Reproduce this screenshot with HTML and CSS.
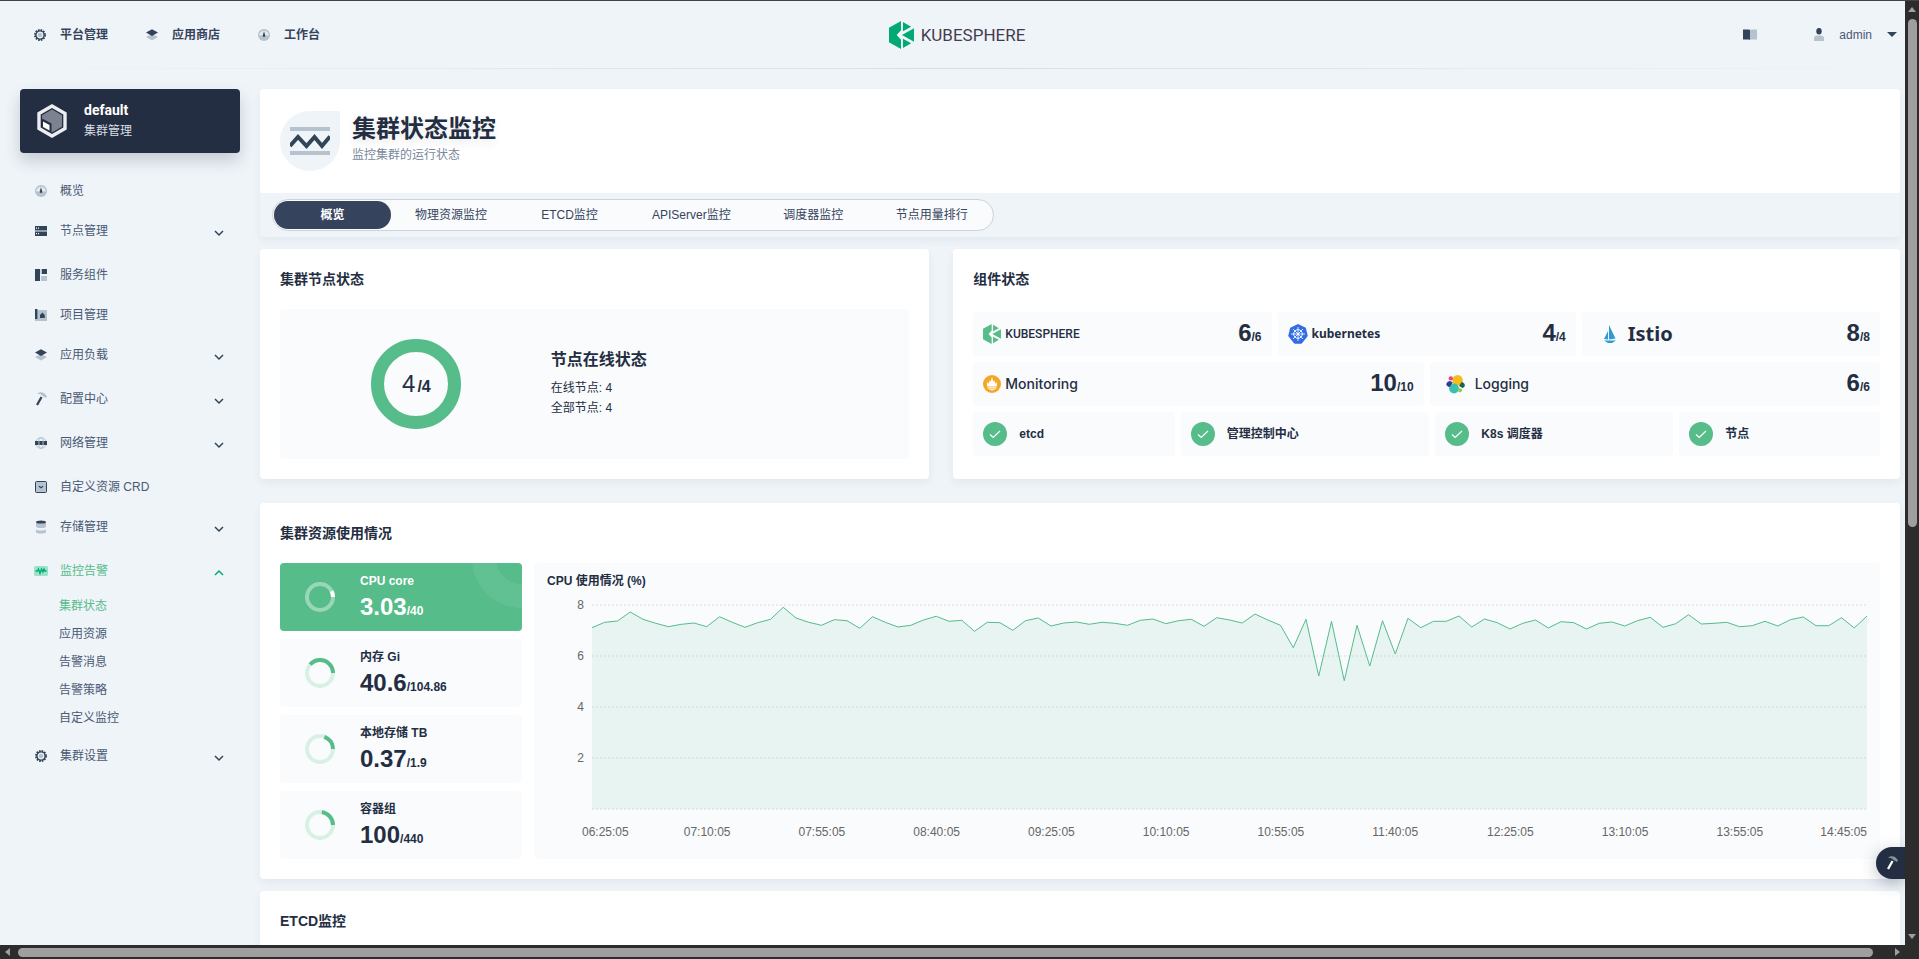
FILE: index.html
```html
<!DOCTYPE html>
<html lang="zh-CN">
<head>
  <meta charset="UTF-8">
  <meta name="viewport" content="width=device-width, initial-scale=1.0">
  <title>KubeSphere</title>
  <link rel="stylesheet" href="styles.css">
</head>
<body>
  <svg class="sprite" aria-hidden="true">
    <symbol id="i-gear" viewBox="0 0 12 12">
      <circle cx="6" cy="6" r="5" fill="none" stroke="#324558" stroke-width="2" stroke-dasharray="1.57 1.05"/>
      <circle cx="6" cy="6" r="4.1" fill="none" stroke="#324558" stroke-width="1.4"/>
      <circle cx="6" cy="6" r="2.3" fill="#b6c2cd"/>
    </symbol>
    <symbol id="i-layers" viewBox="0 0 12 12">
      <path d="M0 8l6-3 6 3-6 3.600z" fill="#b6c2cd"/>
      <path d="M0 3.600L6 .200l6 3.400L6 7z" fill="#324558"/>
    </symbol>
    <symbol id="i-dash" viewBox="0 0 12 12">
      <circle cx="6" cy="6" r="6" fill="#b6c2cd"/>
      <path d="M1.200 6.500a4.800 4.800 0 0 1 9.600 0z" fill="#e3e9ef"/>
      <path d="M6 2.200l1.200 4a1.300 1.300 0 1 1-2.400 0z" fill="#324558"/>
    </symbol>
    <symbol id="i-nodes" viewBox="0 0 12 12">
      <path d="M0 1h12v4.500H0zM0 6.500h12V11H0z" fill="#324558"/>
      <path d="M1 2.600h1v1.200H1zM3 2.600h1v1.200H3zM1 8.100h1v1.200H1zM3 8.100h1v1.200H3z" fill="#fff"/>
    </symbol>
    <symbol id="i-blocks" viewBox="0 0 12 12">
      <path d="M0 0h5v12H0zM7 0h5v5H7z" fill="#324558"/>
      <path d="M6 7h6v5H6zM5.500 0H7v5H5.500z" fill="#b6c2cd"/>
    </symbol>
    <symbol id="i-project" viewBox="0 0 12 12">
      <path d="M2 1h10v11H0v-2h2z" fill="#b6c2cd"/>
      <path d="M0 0h2.400v10H0zM5 9V6l2.400-2.400L9.800 6v3z" fill="#324558"/>
    </symbol>
    <symbol id="i-hammer" viewBox="0 0 12 14">
      <path d="M2 1.500C4.500 0 7 0 9 1l3 3-1 2-2-1.200L7.500 4 6 2.600z" fill="#b6c2cd"/>
      <path d="M5.500 4.500l2 1L3 13.500l-2-1z" fill="#324558"/>
    </symbol>
    <symbol id="i-net" viewBox="0 0 12 12">
      <circle cx="6" cy="6" r="5.400" fill="none" stroke="#b6c2cd"/>
      <ellipse cx="6" cy="6" rx="2.400" ry="5.400" fill="none" stroke="#b6c2cd"/>
      <path d="M0 4h3.500v4H0zM4.300 4h3.400v4H4.300zM8.500 4H12v4H8.500z" fill="#324558"/>
    </symbol>
    <symbol id="i-crd" viewBox="0 0 12 12">
      <rect x=".5" y=".5" width="11" height="11" rx="1" fill="#b6c2cd" stroke="#324558"/>
      <path d="M4 5.300l2 1.500 2-1.500" fill="none" stroke="#324558" stroke-width="1.200"/>
    </symbol>
    <symbol id="i-db" viewBox="0 0 12 14">
      <path d="M1 2v4.500c0 2 10 2 10 0V2zM1 9v3c0 2 10 2 10 0V9c0 2-10 2-10 0z" fill="#b6c2cd"/>
      <ellipse cx="6" cy="2" rx="5" ry="1.600" fill="#324558"/>
    </symbol>
    <symbol id="i-monitor" viewBox="0 0 14 10">
      <rect width="14" height="10" rx="1.500" fill="#9be3c8"/>
      <path d="M1.500 5h2l1-2 1.500 4.500L7.500 3 9 6l1-3 1 2h1.500" fill="none" stroke="#00aa72" stroke-width="1.300"/>
    </symbol>
    <symbol id="i-down" viewBox="0 0 10 12">
      <path d="M1 6l4 4 4-4" fill="none" stroke="#324558" stroke-width="1.500"/>
    </symbol>
    <symbol id="i-up" viewBox="0 0 10 12">
      <path d="M1 10l4-4 4 4" fill="none" stroke="#00aa72" stroke-width="1.500"/>
    </symbol>
    <symbol id="i-ks" viewBox="0 0 52 58">
      <path d="M0 14L25 0v19l-9 10 9 10v19L0 44zM29 2l17 10-17 9zM29 56l17-10-17-9zM27 29l25-14v28z"/>
    </symbol>
    <symbol id="i-check" viewBox="0 0 24 24">
      <circle cx="12" cy="12" r="12" fill="#55bc8a"/>
      <path d="M7 12.500l3.200 3L17 9" fill="none" stroke="#fff" stroke-width="1.200"/>
    </symbol>
  </svg>

  <div class="window">
    <div class="viewport">
      <div class="page">
        <header class="header">
          <nav class="top-nav">
            <a href="#"><svg class="icon"><use href="#i-gear"/></svg>平台管理</a>
            <a href="#"><svg class="icon"><use href="#i-layers"/></svg>应用商店</a>
            <a href="#"><svg class="icon"><use href="#i-dash"/></svg>工作台</a>
          </nav>
          <a class="logo" href="#"><svg class="logo-mark"><use href="#i-ks"/></svg>KUBESPHERE</a>
          <div class="user-nav">
            <a href="#" aria-label="文档">
              <svg class="icon-book" viewBox="0 0 14 11">
                <path d="M0 .500h6l1 .500v10l-1-.500H0z" fill="#324558"/>
                <path d="M14 .500H8L7 1v10l1-.500h6z" fill="#b6c2cd"/>
              </svg>
            </a>
            <button class="user">
              <svg class="icon-user" viewBox="0 0 10 13">
                <path d="M0 13v-3c0-2 2-2.500 5-2.500s5 .500 5 2.500v3z" fill="#b6c2cd"/>
                <ellipse cx="5" cy="3.300" rx="2.700" ry="3.300" fill="#324558"/>
              </svg>
              admin
              <svg class="icon-caret" viewBox="0 0 10 5"><path d="M0 0h10L5 5z" fill="#324558"/></svg>
            </button>
          </div>
        </header>
        <div class="header-line"></div>

        <div class="layout">
          <aside class="sidebar">
            <div class="cluster">
              <svg class="cluster-icon" viewBox="0 0 30 34">
                <path d="M15 2l13 7.500v15L15 32 2 24.500v-15z" fill="none" stroke="#eceef0" stroke-width="3.400"/>
                <path d="M15 5.500l10 5.700v11.600L15 28.500 5 22.800V11.200z" fill="#7c8290"/>
                <path d="M5 14.500l9.500 5v9L5 23.500z" fill="#242e42"/>
                <path d="M6 17.500l6.500 3.500v5.500L6 23z" fill="#fff"/>
              </svg>
              <div class="cluster-text">
                <strong>default</strong>
                <p>集群管理</p>
              </div>
            </div>

            <ul class="menu">
              <li><a href="#"><svg class="icon"><use href="#i-dash"/></svg>概览</a></li>
              <li class="parent"><button><svg class="icon"><use href="#i-nodes"/></svg>节点管理<svg class="arrow"><use href="#i-down"/></svg></button></li>
              <li><a href="#"><svg class="icon"><use href="#i-blocks"/></svg>服务组件</a></li>
              <li><a href="#"><svg class="icon"><use href="#i-project"/></svg>项目管理</a></li>
              <li class="parent"><button><svg class="icon"><use href="#i-layers"/></svg>应用负载<svg class="arrow"><use href="#i-down"/></svg></button></li>
              <li class="parent"><button><svg class="icon tall"><use href="#i-hammer"/></svg>配置中心<svg class="arrow"><use href="#i-down"/></svg></button></li>
              <li class="parent"><button><svg class="icon"><use href="#i-net"/></svg>网络管理<svg class="arrow"><use href="#i-down"/></svg></button></li>
              <li><a href="#"><svg class="icon"><use href="#i-crd"/></svg>自定义资源 CRD</a></li>
              <li class="parent"><button><svg class="icon tall"><use href="#i-db"/></svg>存储管理<svg class="arrow"><use href="#i-down"/></svg></button></li>
              <li class="parent">
                <button class="active"><svg class="icon wide"><use href="#i-monitor"/></svg>监控告警<svg class="arrow"><use href="#i-up"/></svg></button>
                <ul class="submenu">
                  <li><a class="active" href="#">集群状态</a></li>
                  <li><a href="#">应用资源</a></li>
                  <li><a href="#">告警消息</a></li>
                  <li><a href="#">告警策略</a></li>
                  <li><a href="#">自定义监控</a></li>
                </ul>
              </li>
              <li class="parent"><button><svg class="icon"><use href="#i-gear"/></svg>集群设置<svg class="arrow"><use href="#i-down"/></svg></button></li>
            </ul>
          </aside>

          <main class="main">
            <section class="banner">
              <div class="banner-top">
                <div class="banner-icon">
                  <svg viewBox="0 0 40 28">
                    <path d="M0 0h40v4H0zM0 24h40v4H0z" fill="#b6c2cd"/>
                    <path d="M0 19l8-9 8.500 9 8-9 7.500 9 8-9.500" fill="none" stroke="#324558" stroke-width="4"/>
                  </svg>
                </div>
                <div class="banner-text">
                  <h1>集群状态监控</h1>
                  <p>监控集群的运行状态</p>
                </div>
              </div>
              <div class="banner-tabs">
                <div class="tabs">
                  <button class="active">概览</button>
                  <button>物理资源监控</button>
                  <button>ETCD监控</button>
                  <button>APIServer监控</button>
                  <button>调度器监控</button>
                  <button>节点用量排行</button>
                </div>
              </div>
            </section>

            <div class="columns">
              <section class="card nodes">
                <h2>集群节点状态</h2>
                <div class="node-box">
                  <div class="donut"><span>4</span><b>/4</b></div>
                  <div class="node-info">
                    <h3>节点在线状态</h3>
                    <p>在线节点: 4</p>
                    <p>全部节点: 4</p>
                  </div>
                </div>
              </section>

              <section class="card components">
                <h2>组件状态</h2>
                <div class="tiles">
                  <div class="tile-row even">
                    <div class="tile">
                      <svg class="tile-ks"><use href="#i-ks"/></svg>
                      <span class="name-ks">KUBESPHERE</span>
                      <span class="count"><b>6</b>/6</span>
                    </div>
                    <div class="tile">
                      <svg class="tile-k8s" viewBox="0 0 20 20">
                        <path d="M10 0l7.800 3.800L19.800 12l-5.400 6.800q-.5 1-1.500 1H7.100q-1 0-1.500-1L.2 12l2-8.200z" fill="#326de6"/>
                        <g fill="none" stroke="#fff">
                          <circle cx="10" cy="10" r="4.300"/>
                          <path d="M10 3v14M3 10h14M5 5l10 10M15 5L5 15" stroke-width=".8"/>
                        </g>
                        <circle cx="10" cy="10" r="1.200" fill="#fff"/>
                      </svg>
                      <span class="name-k8s">kubernetes</span>
                      <span class="count"><b>4</b>/4</span>
                    </div>
                    <div class="tile">
                      <svg class="tile-istio" viewBox="0 0 12 18">
                        <path d="M5 0l6.500 13.500L5 14.500zM4 6v8.500L0 14zM0 15.500h12L8 18H4z" fill="#2f9bd1"/>
                      </svg>
                      <span class="name-istio">Istio</span>
                      <span class="count"><b>8</b>/8</span>
                    </div>
                  </div>
                  <div class="tile-row even">
                    <div class="tile">
                      <svg class="tile-prom" viewBox="0 0 18 18">
                        <circle cx="9" cy="9" r="9" fill="#f5a623"/>
                        <path d="M4.500 11.500C3.500 9.500 4 8.500 4.500 7l1.200 2L6.500 5l1 2L9 2l1.500 5 1-2 .8 4 1.200-2c.5 1.500 1 2.500 0 4.500zM4.500 12.300h9v1.200h-9zM6 14.300h6c-.5 1.500-5.500 1.500-6 0z" fill="#fff"/>
                      </svg>
                      <span class="name-text">Monitoring</span>
                      <span class="count"><b>10</b>/10</span>
                    </div>
                    <div class="tile">
                      <svg class="tile-log" viewBox="0 0 19 19">
                        <circle cx="11.600" cy="5.200" r="5.200" fill="#f4bd19"/>
                        <circle cx="8" cy="13.500" r="4.900" fill="#3cbeb1"/>
                        <circle cx="4.800" cy="3.400" r="2.200" fill="#ea458b"/>
                        <path d="M4 6l2.800 1.600-3 4.400C-.5 12-1 7 4 6z" fill="#2d3f8c"/>
                        <path d="M15.500 7c4 .500 4.500 5 1 6l-3.500-2z" fill="#14694f"/>
                        <path d="M13 13l3 1.200c.5 3-2.500 4-3.700 2.300z" fill="#93c83e"/>
                      </svg>
                      <span class="name-text">Logging</span>
                      <span class="count"><b>6</b>/6</span>
                    </div>
                  </div>
                  <div class="tile-row">
                    <div class="tile"><svg class="check"><use href="#i-check"/></svg>etcd</div>
                    <div class="tile"><svg class="check"><use href="#i-check"/></svg>管理控制中心</div>
                    <div class="tile"><svg class="check"><use href="#i-check"/></svg>K8s 调度器</div>
                    <div class="tile"><svg class="check"><use href="#i-check"/></svg>节点</div>
                  </div>
                </div>
              </section>
            </div>

            <section class="card usage">
              <h2>集群资源使用情况</h2>
              <div class="usage-body">
                <div class="stats">
                  <div class="stat active">
                    <svg class="ring" viewBox="0 0 30 30">
                      <circle cx="15" cy="15" r="13"/>
                      <circle class="value" cx="15" cy="15" r="13" pathLength="100" stroke-dasharray="7.6 100"/>
                    </svg>
                    <div class="stat-text"><h3>CPU core</h3><p><b>3.03</b>/40</p></div>
                  </div>
                  <div class="stat">
                    <svg class="ring" viewBox="0 0 30 30">
                      <circle cx="15" cy="15" r="13"/>
                      <circle class="value" cx="15" cy="15" r="13" pathLength="100" stroke-dasharray="38.7 100"/>
                    </svg>
                    <div class="stat-text"><h3>内存 Gi</h3><p><b>40.6</b>/104.86</p></div>
                  </div>
                  <div class="stat">
                    <svg class="ring" viewBox="0 0 30 30">
                      <circle cx="15" cy="15" r="13"/>
                      <circle class="value" cx="15" cy="15" r="13" pathLength="100" stroke-dasharray="19.5 100"/>
                    </svg>
                    <div class="stat-text"><h3>本地存储 TB</h3><p><b>0.37</b>/1.9</p></div>
                  </div>
                  <div class="stat">
                    <svg class="ring" viewBox="0 0 30 30">
                      <circle cx="15" cy="15" r="13"/>
                      <circle class="value" cx="15" cy="15" r="13" pathLength="100" stroke-dasharray="22.7 100"/>
                    </svg>
                    <div class="stat-text"><h3>容器组</h3><p><b>100</b>/440</p></div>
                  </div>
                </div>

                <div class="chart">
                  <h3>CPU 使用情况 (%)</h3>
                  <div class="chart-area">
                    <div class="y-axis"><span>8</span><span>6</span><span>4</span><span>2</span></div>
                    <svg class="plot" viewBox="0 0 100 204" preserveAspectRatio="none">
                      <path class="grid" d="M0 0H100M0 51H100M0 102H100M0 153H100M0 204H100"/>
                      <polygon class="area" points="0,204 0,22.7 1,17.3 2,16 3,7 4,14.3 5,18.3 6,21.7 7,19.3 8,18 9,21.7 10,11.7 11,17.3 12,22.3 13,17.7 14,14.3 15,2.3 16,13 17,17.3 18,20.3 19,14.7 20,15.7 21,23.3 22,11.7 23,17.3 24,22 25,20.3 26,15 27,11.3 28,16.3 29,15.3 30,26.3 31,17.3 32,17.7 33,25.3 34,15.7 35,13 36,21 37,18 38,17 39,19.3 40,17.3 41,18.3 42,20.3 43,15.3 44,14 45,18.7 46,15.7 47,14.3 48,21.3 49,12.7 50,15 51,18 52,9 53,15 54,20.3 55,42.7 56,14.3 57,71 58,16.3 59,75.7 60,20.3 61,61 62,15.7 63,49 64,13.3 65,22.7 66,16.3 67,16.3 68,11 69,22 70,14 71,17.7 72,24 73,18.3 74,15 75,23 76,16.7 77,17.7 78,24 79,18.3 80,17 81,21 82,15.7 83,12.3 84,22.3 85,18.7 86,9.7 87,19 88,18.3 89,17.3 90,21.7 91,20.7 92,16.3 93,21 94,14.7 95,12 96,20.7 97,20.7 98,12.7 99,23 100,11 100,204"/>
                      <polyline class="line" points="0,22.7 1,17.3 2,16 3,7 4,14.3 5,18.3 6,21.7 7,19.3 8,18 9,21.7 10,11.7 11,17.3 12,22.3 13,17.7 14,14.3 15,2.3 16,13 17,17.3 18,20.3 19,14.7 20,15.7 21,23.3 22,11.7 23,17.3 24,22 25,20.3 26,15 27,11.3 28,16.3 29,15.3 30,26.3 31,17.3 32,17.7 33,25.3 34,15.7 35,13 36,21 37,18 38,17 39,19.3 40,17.3 41,18.3 42,20.3 43,15.3 44,14 45,18.7 46,15.7 47,14.3 48,21.3 49,12.7 50,15 51,18 52,9 53,15 54,20.3 55,42.7 56,14.3 57,71 58,16.3 59,75.7 60,20.3 61,61 62,15.7 63,49 64,13.3 65,22.7 66,16.3 67,16.3 68,11 69,22 70,14 71,17.7 72,24 73,18.3 74,15 75,23 76,16.7 77,17.7 78,24 79,18.3 80,17 81,21 82,15.7 83,12.3 84,22.3 85,18.7 86,9.7 87,19 88,18.3 89,17.3 90,21.7 91,20.7 92,16.3 93,21 94,14.7 95,12 96,20.7 97,20.7 98,12.7 99,23 100,11"/>
                    </svg>
                  </div>
                  <div class="x-axis">
                    <span>06:25:05</span><span>07:10:05</span><span>07:55:05</span><span>08:40:05</span>
                    <span>09:25:05</span><span>10:10:05</span><span>10:55:05</span><span>11:40:05</span>
                    <span>12:25:05</span><span>13:10:05</span><span>13:55:05</span><span>14:45:05</span>
                  </div>
                </div>
              </div>
            </section>

            <section class="card etcd">
              <h2>ETCD监控</h2>
            </section>
          </main>
        </div>
      </div>

      <button class="toolbox" aria-label="工具箱">
        <svg viewBox="0 0 12 14">
          <path d="M2 1.500C4.500 0 7 0 9 1l3 3-1 2-2-1.200L7.500 4 6 2.600z" fill="#8a909d"/>
          <path d="M5.500 4.500l2 1L3 13.500l-2-1z" fill="#fff"/>
        </svg>
      </button>
    </div>

    <div class="scroll-y">
      <svg viewBox="0 0 8 5"><path d="M0 5h8L4 0z"/></svg>
      <div class="track"><div class="thumb"></div></div>
      <svg viewBox="0 0 8 5"><path d="M0 0h8L4 5z"/></svg>
    </div>
    <div class="scroll-x">
      <svg viewBox="0 0 5 8"><path d="M5 0v8L0 4z"/></svg>
      <div class="track"><div class="thumb"></div></div>
      <svg viewBox="0 0 5 8"><path d="M0 0v8l5-4z"/></svg>
    </div>
    <div class="corner"></div>
  </div>
</body>
</html>
```
FILE: styles.css
```css
* {
  margin: 0;
  padding: 0;
  box-sizing: border-box;
}

body {
  font-family: "Liberation Sans", "Noto Sans CJK SC", sans-serif;
  font-size: 12px;
  line-height: 20px;
  color: #242e42;
  background: #eff4f9;
}

a {
  color: inherit;
  text-decoration: none;
}

button {
  font: inherit;
  color: inherit;
  background: none;
  border: none;
  cursor: pointer;
}

ul {
  list-style: none;
}

svg {
  display: block;
  flex-shrink: 0;
}

.sprite {
  display: none;
}

/* window frame */
.window {
  display: grid;
  grid-template: minmax(0, 1fr) 14px / minmax(0, 1fr) 14px;
  height: 100vh;
  border-top: 1px solid #434347;
  overflow: hidden;
}

.viewport {
  position: relative;
  overflow: hidden;
}

.page {
  width: calc(100% + 15px);
}

.scroll-y,
.scroll-x {
  display: flex;
  align-items: center;
  background: #2c2c2c;
  fill: #9f9f9f;
}

.scroll-y {
  flex-direction: column;
  padding: 6px 0;
}

.scroll-x {
  padding: 0 5px;
}

.scroll-y svg {
  width: 8px;
  height: 5px;
}

.scroll-x svg {
  width: 5px;
  height: 8px;
}

.track {
  flex: 1;
}

.scroll-y .track {
  padding: 7px 0;
}

.scroll-x .track {
  padding: 0 22px 0 8px;
}

.thumb {
  border-radius: 5px;
  background: #9f9f9f;
}

.scroll-y .thumb {
  width: 9px;
  height: 56%;
}

.scroll-x .thumb {
  height: 9px;
}

.corner {
  background: #2c2c2c;
}

/* header */
.header {
  display: grid;
  grid-template-columns: 1fr auto 1fr;
  align-items: center;
  height: 67px;
  padding: 0 23px;
}

.header-line {
  height: 1px;
  background: linear-gradient(to right, rgba(216, 221, 230, 0), #d8dde6 50%, rgba(216, 221, 230, 0));
}

.icon {
  width: 12px;
  height: 12px;
}

.icon.tall {
  height: 14px;
}

.icon.wide {
  width: 14px;
  height: 10px;
  margin: 0 -1px;
}

.top-nav {
  display: flex;
  gap: 38px;
  padding-left: 11px;
  font-weight: bold;
  color: #36435c;
}

.top-nav a {
  display: flex;
  align-items: center;
  gap: 14px;
}

.logo {
  display: flex;
  align-items: center;
  gap: 7px;
  padding-right: 6px;
  font-family: Roboto, sans-serif;
  font-size: 17px;
  color: #443d4e;
}

.logo-mark {
  width: 25px;
  height: 28px;
  fill: #00aa72;
}

.user-nav {
  display: flex;
  justify-content: flex-end;
  align-items: center;
  gap: 57px;
  color: #4a5974;
}

.user {
  display: flex;
  align-items: center;
  gap: 15px;
}

.icon-book {
  width: 14px;
  height: 11px;
}

.icon-user {
  width: 10px;
  height: 13px;
}

.icon-caret {
  width: 10px;
  height: 5px;
}

.layout {
  display: flex;
  gap: 20px;
  padding: 20px;
}

/* sidebar */
.sidebar {
  flex: 0 0 220px;
}

.cluster {
  display: flex;
  align-items: center;
  gap: 17px;
  height: 64px;
  padding: 0 17px;
  border-radius: 4px;
  background: #242e42;
  box-shadow: 0 8px 16px rgba(36, 46, 66, 0.2);
  color: #d8dee5;
}

.cluster-icon {
  width: 30px;
  height: 34px;
}

.cluster-text {
  padding-bottom: 2px;
}

.cluster strong {
  font-family: Roboto, sans-serif;
  font-size: 14px;
  color: #fff;
}

.menu {
  padding: 18px 16px 18px 15px;
  color: #4a5974;
}

.menu > li > a,
.menu > li > button {
  display: flex;
  align-items: center;
  gap: 13px;
  width: 100%;
  height: 40px;
}

.menu .parent {
  padding-bottom: 4px;
}

.menu .active {
  color: #55bc8a;
}

.arrow {
  width: 10px;
  height: 12px;
  margin-left: auto;
}

.submenu {
  padding: 1px 0 0 24px;
}

.submenu a {
  display: block;
  line-height: 28px;
}

/* main */
.main {
  flex: 1;
  min-width: 0;
}

.banner,
.card {
  border-radius: 4px;
  box-shadow: 0 4px 8px rgba(36, 46, 66, 0.06);
}

.banner {
  margin-bottom: 12px;
}

.banner-top {
  display: flex;
  gap: 12px;
  height: 104px;
  padding: 22px 20px;
  border-radius: 4px 4px 0 0;
  background: #fff;
}

.banner-icon {
  display: flex;
  align-items: center;
  justify-content: center;
  width: 60px;
  height: 60px;
  border-radius: 50% 0 50% 50%;
  background: #eff4f9;
}

.banner-icon svg {
  width: 40px;
  height: 28px;
}

.banner-text {
  padding-top: 2px;
}

.banner-text h1 {
  font-size: 24px;
  line-height: 32px;
  text-shadow: 0 4px 8px rgba(36, 46, 66, 0.1);
}

.banner-text p {
  color: #79879c;
}

.banner-tabs {
  display: flex;
  padding: 6px 12px;
}

.tabs {
  display: flex;
  padding: 1px;
  border: 1px solid #ccd3db;
  border-radius: 16px;
  background: #f9fbfd;
}

.tabs button {
  min-width: 117px;
  height: 28px;
  padding: 0 24px;
  border-radius: 14px;
  color: #36435c;
}

.tabs .active {
  background: #36435c;
  color: #fff;
  font-weight: bold;
}

.card {
  padding: 20px;
  background: #fff;
}

.card h2 {
  margin-bottom: 20px;
  font-size: 14px;
  line-height: 20px;
}

.columns {
  display: grid;
  grid-template-columns: repeat(12, minmax(0, 1fr));
  gap: 24px;
  margin-bottom: 24px;
}

.nodes {
  grid-column: span 5;
}

.components {
  grid-column: span 7;
}

.node-box {
  display: grid;
  grid-template-columns: 3fr 4fr;
  align-items: center;
  height: 150px;
  padding-left: 2px;
  border-radius: 4px;
  background: #f9fbfd;
}

.donut {
  display: flex;
  align-items: baseline;
  justify-content: center;
  gap: 2px;
  width: 90px;
  height: 90px;
  margin: 0 auto;
  border: 13px solid #55bc8a;
  border-radius: 50%;
  line-height: 64px;
}

.donut span {
  font-size: 24px;
}

.donut b {
  font-size: 16px;
}

.node-info h3 {
  margin-bottom: 8px;
  font-size: 16px;
}

.tiles {
  display: grid;
  gap: 6px;
  padding: 3px 0;
}

.tile-row {
  display: flex;
  gap: 6px;
}

.tile {
  display: flex;
  flex: 1 1 auto;
  align-items: center;
  gap: 12px;
  height: 44px;
  padding: 0 10px;
  border-radius: 4px;
  background: #f9fbfd;
  font-weight: bold;
}

.even .tile {
  flex: 1 1 0;
  gap: 4px;
}

.count {
  margin-left: auto;
  padding-top: 2px;
}

.count b {
  font-size: 24px;
}

.check {
  width: 24px;
  height: 24px;
}

.tile-ks {
  width: 18px;
  height: 20px;
  fill: #55bc8a;
}

.name-ks {
  font-family: Roboto, sans-serif;
  font-weight: 500;
}

.tile-k8s {
  width: 20px;
  height: 20px;
}

.name-k8s {
  font-family: "Noto Sans", sans-serif;
}

.tile-istio {
  width: 12px;
  height: 18px;
  margin: 0 8px 0 12px;
}

.name-istio {
  font-family: "Noto Sans", sans-serif;
  font-size: 20px;
}

.tile-prom {
  width: 18px;
  height: 18px;
}

.tile-log {
  width: 19px;
  height: 19px;
  margin: 0 6px;
}

.name-text {
  font-family: Inter, sans-serif;
  font-size: 14px;
  font-weight: 500;
}

/* resource usage */
.usage {
  margin-bottom: 12px;
}

.usage-body {
  display: flex;
  gap: 12px;
}

.stats {
  display: grid;
  flex: 0 0 242px;
  gap: 8px;
}

.stat {
  display: flex;
  align-items: center;
  gap: 25px;
  height: 68px;
  padding: 0 25px;
  border-radius: 4px;
  background: #f9fbfd;
  font-weight: bold;
}

.stat.active {
  background: radial-gradient(circle at 100% -5px, transparent 26px, rgba(255, 255, 255, 0.07) 26px 50px, transparent 50px) #55bc8a;
  color: #fff;
}

.stat-text {
  padding-top: 4px;
}

.stat h3 {
  font-size: 12px;
}

.stat p {
  line-height: 32px;
}

.stat b {
  font-size: 24px;
}

.ring {
  width: 30px;
  height: 30px;
  fill: none;
  stroke: #d9f0e5;
  stroke-width: 4;
  transform: scaleY(-1);
}

.ring .value {
  stroke: #55bc8a;
}

.active .ring {
  stroke: #99d7b8;
}

.active .ring .value {
  stroke: #fff;
}

.chart {
  flex: 1;
  min-width: 0;
  padding: 8px 13px;
  border-radius: 4px;
  background: #f9fbfd;
}

.chart h3 {
  margin-bottom: 14px;
  font-size: 12px;
}

.chart-area {
  display: flex;
  gap: 8px;
  height: 204px;
  color: #666;
}

.y-axis {
  width: 37px;
  margin-top: -10px;
  text-align: right;
}

.y-axis span {
  display: block;
  height: 51px;
}

.plot {
  flex: 1;
  min-width: 0;
  height: 204px;
  overflow: visible;
}

.plot * {
  vector-effect: non-scaling-stroke;
}

.grid {
  stroke: #d8dee5;
  stroke-dasharray: 2 2;
}

.area {
  fill: #55bc8a;
  fill-opacity: 0.1;
}

.line {
  fill: none;
  stroke: #55bc8a;
}

.x-axis {
  display: grid;
  grid-template-columns: 102fr repeat(9, 115fr) 104fr auto;
  padding: 13px 0 0 35px;
  color: #666;
}

.etcd {
  min-height: 200px;
}

.toolbox {
  position: absolute;
  right: 0;
  bottom: 66px;
  width: 29px;
  height: 32px;
  padding-left: 10px;
  border-radius: 16px 0 0 16px;
  background: #242e42;
  box-shadow: 0 4px 16px rgba(36, 46, 66, 0.3);
}

.toolbox svg {
  width: 12px;
  height: 14px;
}
```
